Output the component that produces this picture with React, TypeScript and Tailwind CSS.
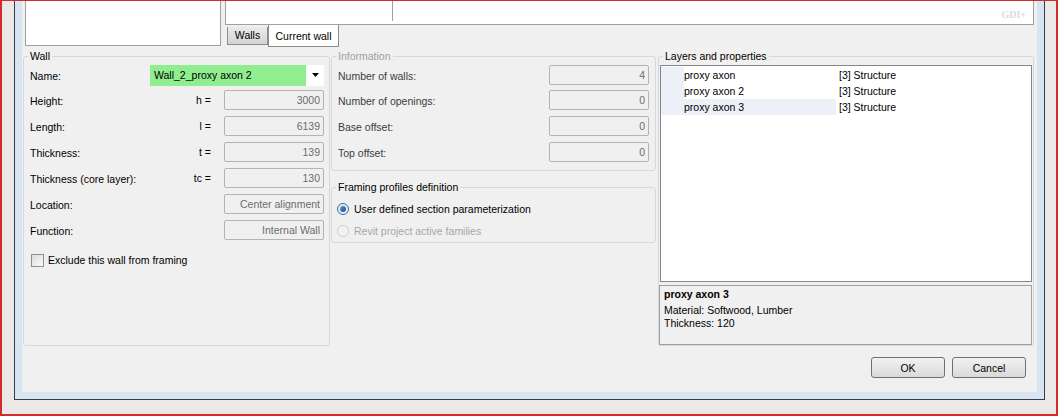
const font = "font-['Liberation_Sans',Arial,sans-serif]";

function ValueBox({ children, w = "w-[100px]" }: { children: React.ReactNode; w?: string }) {
  return (
    <div
      className={`${w} h-[20px] border border-[#b3b3b3] rounded-[2px] bg-[#f0f0f0] text-[#6d6d6d] flex items-center justify-end pr-[3px]`}
    >
      {children}
    </div>
  );
}

function WallRow({ label, sym, value }: { label: string; sym?: string; value: string }) {
  return (
    <div className="flex items-center h-[26px] pl-[6px] pr-[5px]">
      <span className="flex-1 pt-[2px]">{label}</span>
      {sym && <span className="mr-[13px] pt-[1px]">{sym}</span>}
      <ValueBox>{value}</ValueBox>
    </div>
  );
}

function InfoRow({ label, value, first }: { label: string; value: string; first?: boolean }) {
  return (
    <div className={`flex items-center ${first ? "h-[24px]" : "h-[26px]"} pl-[6px] pr-[6px]`}>
      <span className="flex-1 pt-[2px] text-[#3c3c3c]">{label}</span>
      <ValueBox>{value}</ValueBox>
    </div>
  );
}

const layers = [
  { name: "proxy axon", kind: "[3] Structure" },
  { name: "proxy axon 2", kind: "[3] Structure" },
  { name: "proxy axon 3", kind: "[3] Structure", selected: true },
];

export default function App() {
  return (
    <div
      className={`w-[1058px] h-[416px] bg-[#ebe8e8] border-t border-x-2 border-b-2 border-[#d42a2a] pl-[12px] pr-[11px] pb-[14px] overflow-hidden text-[10.5px] leading-[13px] text-black ${font}`}
    >
      {/* window frame */}
      <div className="h-full border-x border-b border-[#3a3a48]">
        <div className="h-full border-x-[7px] border-b-[7px] border-[#d9e4f1] bg-[#f0f0f0]">
          {/* preview area */}
          <div className="flex h-[46px]">
            <div className="ml-[3px] w-[196px] h-[45px] bg-white border border-t-0 border-[#a0a0a0]" />
            <div className="ml-[4px] w-[809px] flex flex-col">
              <div className="h-[24px] bg-white border border-t-0 border-[#a0a0a0] flex items-start">
                <div className="w-[167px] h-[20px] border-r border-[#a0a0a0]" />
                <div className="flex-1 flex justify-end pr-[7px] pt-[9px]">
                  <span className="font-['Liberation_Serif',serif] font-bold text-[10px] leading-[10px] text-[#dcdcdc]">
                    GDI+
                  </span>
                </div>
              </div>
              <div className="flex">
                <div className="ml-[2px] mt-[2px] h-[18px] w-[41px] border border-t-0 border-[#8c8c8c] bg-gradient-to-b from-[#ebebeb] to-[#d4d4d4] flex items-center justify-center">
                  Walls
                </div>
                <div className="h-[22px] w-[71px] bg-white border border-t-0 border-[#8c8c8c] flex items-center justify-center pt-[2px]">
                  Current wall
                </div>
              </div>
            </div>
          </div>

          {/* groups */}
          <div className="flex items-start">
            {/* Wall */}
            <fieldset className="ml-[1px] mt-[3px] w-[307px] h-[296px] border border-[#d5d9dd] rounded-[3px]">
              <legend className="ml-[4px] px-[2px] leading-[13px]">Wall</legend>
              <div className="flex items-center h-[24px] pl-[6px] pr-[5px]">
                <span className="flex-1 pt-[2px]">Name:</span>
                <div className="w-[174px] h-[21px] flex bg-white">
                  <div className="flex-1 bg-[#90ee90] flex items-center pl-[4px]">Wall_2_proxy axon 2</div>
                  <div className="w-[18px] flex items-center justify-center">
                    <svg width="7" height="4" viewBox="0 0 7 4">
                      <path d="M0 0h7L3.5 4z" fill="#000" />
                    </svg>
                  </div>
                </div>
              </div>
              <WallRow label="Height:" sym="h =" value="3000" />
              <WallRow label="Length:" sym="l =" value="6139" />
              <WallRow label="Thickness:" sym="t =" value="139" />
              <WallRow label="Thickness (core layer):" sym="tc =" value="130" />
              <WallRow label="Location:" value="Center alignment" />
              <WallRow label="Function:" value="Internal Wall" />
              <div className="mt-[4px] h-[26px] flex items-center pl-[7px]">
                <span className="w-[13px] h-[13px] border border-[#8e8f8f] bg-gradient-to-br from-[#dcdcdc] to-[#fafafa] mr-[4px]" />
                <span className="pt-[1px]">Exclude this wall from framing</span>
              </div>
            </fieldset>

            {/* Information + framing */}
            <div className="ml-[1px] w-[325px] flex flex-col">
              <fieldset className="mt-[3px] border border-[#d5d9dd] rounded-[3px] pb-[5px]">
                <legend className="ml-[4px] px-[2px] leading-[13px] text-[#a0a0a0]">Information</legend>
                <InfoRow first label="Number of walls:" value="4" />
                <InfoRow label="Number of openings:" value="0" />
                <InfoRow label="Base offset:" value="0" />
                <InfoRow label="Top offset:" value="0" />
              </fieldset>
              <fieldset className="mt-[10px] border border-[#d5d9dd] rounded-[3px]">
                <legend className="ml-[4px] px-[2px] leading-[13px]">Framing profiles definition</legend>
                <div className="mt-[4px] h-[22px] flex items-center pl-[5px]">
                  <span className="w-[12px] h-[12px] rounded-full border border-[#3c6ea0] bg-[#e8eef5] flex items-center justify-center mr-[5px]">
                    <span className="w-[6px] h-[6px] rounded-full bg-gradient-to-br from-[#5aa0d8] to-[#134e8a]" />
                  </span>
                  <span className="pt-[1px]">User defined section parameterization</span>
                </div>
                <div className="h-[22px] flex items-center pl-[5px]">
                  <span className="w-[12px] h-[12px] rounded-full border border-[#cdd0d4] bg-[#f2f2f2] mr-[5px]" />
                  <span className="pt-[1px] text-[#a7a7a7]">Revit project active families</span>
                </div>
              </fieldset>
            </div>

            {/* Layers */}
            <fieldset className="ml-[2px] mt-[3px] w-[376px] border border-[#d5d9dd] rounded-[3px]">
              <legend className="ml-[4px] px-[2px] leading-[13px]">Layers and properties</legend>
              <div className="mt-[2px] mx-[1px] h-[217px] border border-[#828790] bg-white pt-[1px]">
                {layers.map((l) => (
                  <div key={l.name} className="flex h-[16px] items-center">
                    <div
                      className={`w-[175px] h-full flex items-center ${l.selected ? "bg-[#ecf0f7]" : ""}`}
                    >
                      <span className="w-[23px] h-full bg-[#ecf0f7]" />
                      <span className="pt-[1px]">{l.name}</span>
                    </div>
                    <span className="pl-[3px] pt-[1px]">{l.kind}</span>
                  </div>
                ))}
              </div>
              <div className="mt-[3px] mr-[1px] h-[60px] border border-[#a0a0a0] bg-[#f0f0f0] pl-[4px]">
                <div className="font-bold leading-[16px]">proxy axon 3</div>
                <div className="mt-[2px] leading-[13px]">Material: Softwood, Lumber</div>
                <div className="leading-[13px]">Thickness: 120</div>
              </div>
            </fieldset>
          </div>

          {/* buttons */}
          <div className="mt-[11px] flex justify-end gap-[7px] pr-[11px]">
            <button className="w-[74px] h-[21px] rounded-[3px] border border-[#707070] bg-gradient-to-b from-[#f2f2f2] to-[#dadada] pt-[1px]">
              OK
            </button>
            <button className="w-[74px] h-[21px] rounded-[3px] border border-[#707070] bg-gradient-to-b from-[#f2f2f2] to-[#dadada] pt-[1px]">
              Cancel
            </button>
          </div>
        </div>
      </div>
    </div>
  );
}
